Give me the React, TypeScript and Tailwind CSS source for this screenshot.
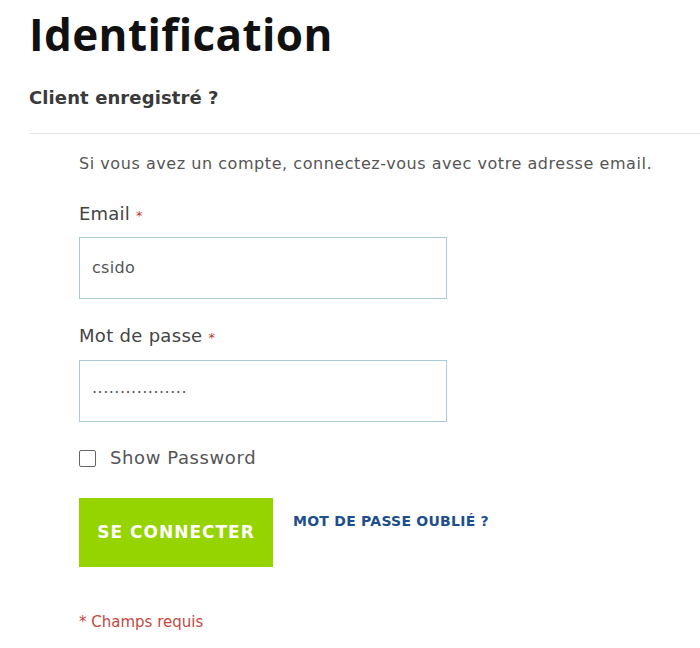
import { useState } from 'react'

export default function App() {
  const [show, setShow] = useState(false)

  return (
    <div className="w-[700px] h-[648px] bg-white overflow-hidden font-['DejaVu_Sans',sans-serif] text-[#333]">
      <div className="pl-[29px] pt-[6px]">
        <h1 className="font-['Open_Sans',sans-serif] text-[44px] leading-[56px] font-bold text-[#111] tracking-[0.4px]">Identification</h1>
        <h2 className="mt-[24px] text-[18px] leading-[24px] font-bold text-[#3a3a3a] tracking-[0.1px]">Client enregistré ?</h2>
        <div className="mt-[23px] h-px bg-[#e4e4e4]" />
      </div>

      <div className="pl-[79px] pt-[19px]">
        <p className="text-[16px] leading-[22px] text-[#555] tracking-[0.55px]">
          Si vous avez un compte, connectez-vous avec votre adresse email.
        </p>

        <label className="block mt-[27px] text-[18px] leading-[24px] text-[#444] tracking-[0.2px]">
          Email <span className="text-[#c0392b] text-[13px]">*</span>
        </label>
        <div className="mt-[9px] w-[368px] h-[62px] border border-[#a9ccd8] flex items-center px-[12px] text-[16px] text-[#555] tracking-[0.3px]">
          csido
        </div>

        <label className="block mt-[25px] text-[18px] leading-[24px] text-[#444] tracking-[0.3px]">
          Mot de passe <span className="text-[#c0392b] text-[13px]">*</span>
        </label>
        <div className="mt-[10px] w-[368px] h-[62px] border border-[#a9ccd8] flex items-center px-[12px] text-[16px] text-[#555]">
          <span className="-mt-[6px] tracking-[0.5px]">{show ? 'csido2024pass!' : '.................'}</span>
        </div>

        <label className="mt-[24px] flex items-center gap-[14px] text-[18px] leading-[24px] text-[#555] tracking-[0.6px] cursor-pointer">
          <span
            onClick={() => setShow(!show)}
            className="w-[17px] h-[17px] border border-[#666] rounded-[2px] bg-white"
          />
          Show Password
        </label>

        <div className="mt-[28px] flex items-start gap-[20px]">
          <button className="w-[194px] h-[69px] bg-[#96d400] text-white text-[17px] font-bold uppercase tracking-[1px]">
            Se connecter
          </button>
          <a className="mt-[14px] text-[14px] leading-[18px] font-bold text-[#1e4f8a] uppercase tracking-[0.25px]">
            Mot de passe oublié ?
          </a>
        </div>

        <p className="mt-[46px] text-[15px] leading-[18px] text-[#c5483f]">* Champs requis</p>
      </div>
    </div>
  )
}
